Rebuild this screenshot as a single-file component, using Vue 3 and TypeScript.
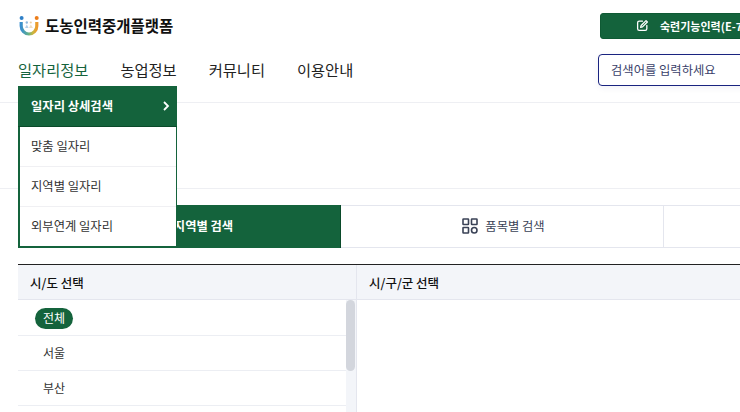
<template>
  <div class="page">
    <header class="site-header">
      <div class="header-top">
        <div class="logo">
          <svg class="logo-mark" width="22" height="22" viewBox="0 0 22 22" aria-hidden="true">
            <defs>
              <linearGradient id="arc" x1="0" y1="0" x2="1" y2="0">
                <stop offset="0" stop-color="#3a8fd0" />
                <stop offset="0.45" stop-color="#62b08a" />
                <stop offset="0.75" stop-color="#c9b83f" />
                <stop offset="1" stop-color="#ee9a2c" />
              </linearGradient>
            </defs>
            <circle cx="3.600" cy="3" r="2" fill="#2f80c8" />
            <circle cx="18.700" cy="3" r="2" fill="#ec7d1a" />
            <path d="M3.200 7 V11 A7.800 8 0 0 0 18.800 11 V7" fill="none" stroke="url(#arc)" stroke-width="3.200" />
            <circle cx="8.800" cy="7.500" r="1.200" fill="#8fb8de" />
            <circle cx="12.800" cy="7.500" r="1.100" fill="#eccf9f" />
            <path d="M7 13 L8.800 9.500 L10.600 13 Z" fill="#b4cfe8" />
            <path d="M11 13 L12.800 9.500 L15 13 Z" fill="#eedfc4" />
          </svg>
          <span class="logo-text">도농인력중개플랫폼</span>
        </div>
        <button class="skilled-btn">
          <svg width="13" height="13" viewBox="0 0 24 24" fill="none" stroke="#fff" stroke-width="2.400" stroke-linecap="round" stroke-linejoin="round" aria-hidden="true">
            <path d="M12 4H6a3 3 0 0 0-3 3v11a3 3 0 0 0 3 3h11a3 3 0 0 0 3-3v-6" />
            <path d="M18.500 3 21 5.500 12 14.500l-3.500 1 1-3.500z" />
          </svg>
          <span>숙련기능인력(E-7-3)</span>
        </button>
      </div>
      <div class="header-nav">
        <nav class="gnb">
          <a
            v-for="(item, i) in gnbItems"
            :key="item"
            class="gnb-item"
            :class="{ active: i === 0 }"
          >{{ item }}</a>
        </nav>
        <div class="search-box">검색어를 입력하세요</div>
      </div>
    </header>

    <ul class="dropdown">
      <li
        v-for="(item, i) in subItems"
        :key="item"
        class="dropdown-item"
        :class="{ selected: i === 0 }"
      >
        <span>{{ item }}</span>
        <svg v-if="i === 0" width="8" height="10" viewBox="0 0 8 10" fill="none" stroke="#fff" stroke-width="1.800" aria-hidden="true">
          <path d="M2 1 6 5 2 9" />
        </svg>
      </li>
    </ul>

    <main class="content">
      <div class="title-rule"></div>
      <div class="tabs">
        <div class="tab active">지역별 검색</div>
        <div class="tab second">
          <svg width="16" height="16" viewBox="0 0 16 16" fill="none" stroke="#3a4256" stroke-width="1.600" aria-hidden="true">
            <rect x="1" y="1" width="5.500" height="5.500" rx="0.500" />
            <rect x="9.500" y="1" width="5.500" height="5.500" rx="0.500" />
            <rect x="1" y="9.500" width="5.500" height="5.500" rx="0.500" />
            <circle cx="12.250" cy="12.250" r="2.750" />
          </svg>
          <span>품목별 검색</span>
        </div>
        <div class="tab"></div>
      </div>

      <div class="picker">
        <section class="col col-region">
          <h4 class="col-head">시/도 선택</h4>
          <div class="col-body">
            <ul class="region-list">
              <li v-for="(r, i) in regions" :key="r" class="region-row">
                <span class="region-name" :class="{ on: i === 0 }">{{ r }}</span>
              </li>
            </ul>
            <div class="scroll-track"><div class="scroll-thumb"></div></div>
          </div>
        </section>
        <section class="col col-city">
          <h4 class="col-head">시/구/군 선택</h4>
        </section>
      </div>
    </main>
  </div>
</template>

<script setup lang="ts">
const gnbItems = ["일자리정보", "농업정보", "커뮤니티", "이용안내"];
const subItems = ["일자리 상세검색", "맞춤 일자리", "지역별 일자리", "외부연계 일자리"];
const regions = ["전체", "서울", "부산"];
</script>

<style>
html,
body {
  margin: 0;
  background: #fff;
  overflow: hidden;
}
</style>

<style scoped>
.page {
  position: relative;
  width: 740px;
  height: 412px;
  overflow: hidden;
  font-family: "Noto Sans CJK KR", "Noto Sans", sans-serif;
  color: #222;
}

.site-header {
  height: 102px;
  border-bottom: 1px solid #eeeff3;
}

.header-top {
  display: flex;
  align-items: center;
  height: 52px;
  padding-left: 18px;
}

.logo {
  display: flex;
  align-items: center;
  gap: 5px;
  width: 582px;
  flex: none;
  padding-bottom: 1px;
}

.logo-mark {
  flex: none;
}

.logo-text {
  font-size: 15.500px;
  font-weight: 700;
  color: #111;
  padding-bottom: 2px;
}

.skilled-btn {
  flex: none;
  display: flex;
  align-items: center;
  justify-content: flex-start;
  gap: 11px;
  width: 260px;
  height: 26px;
  padding: 0 0 0 35px;
  border: 1px solid #0f5a34;
  border-radius: 3px;
  background: #14633c;
  color: #fff;
  font-family: inherit;
  font-size: 11px;
  font-weight: 700;
  margin-top: -1px;
}

.header-nav {
  display: flex;
  align-items: center;
  height: 36px;
  padding-left: 18px;
}

.gnb {
  display: flex;
  gap: 32px;
  width: 580px;
  flex: none;
  padding-bottom: 2px;
}

.gnb-item {
  font-size: 15.300px;
  color: #222;
}

.gnb-item.active {
  color: #14633c;
}

.search-box {
  flex: none;
  width: 260px;
  height: 30px;
  line-height: 30px;
  padding-left: 12px;
  border: 1px solid #1a2480;
  border-radius: 4px;
  box-shadow: 0 2px 6px rgba(30, 40, 120, 0.06);
  font-size: 12.300px;
  color: #3a3f6a;
}

.dropdown {
  position: absolute;
  top: 86px;
  left: 18px;
  z-index: 5;
  width: 159px;
  box-sizing: border-box;
  margin: 0;
  padding: 0;
  list-style: none;
  background: #fff;
  border: 2px solid #14633c;
  border-top: 0;
  border-right-width: 1px;
}

.dropdown-item {
  display: flex;
  align-items: center;
  justify-content: space-between;
  height: 40px;
  box-sizing: border-box;
  padding: 0 6px 2px 11px;
  border-bottom: 1px solid #f0f0f3;
  font-size: 12.300px;
  color: #333;
}

.dropdown-item:last-child {
  height: 39px;
  border-bottom: 0;
}

.dropdown-item.selected {
  height: 41px;
  margin-left: -2px;
  margin-right: -1px;
  padding: 0 7px 0 13px;
  border-bottom: 1px solid #0a4a2a;
  background: #14633c;
  color: #fff;
  font-weight: 700;
}

.content {
  padding: 0 0 0 18px;
}

.title-rule {
  height: 85px;
  margin-left: -18px;
  border-bottom: 1px solid #eeeff3;
}

.tabs {
  display: flex;
  width: 970px;
  height: 43px;
  margin-top: 16px;
  box-sizing: border-box;
  border-top: 1px solid #e4e6ee;
  border-bottom: 1px solid #e4e6ee;
}

.tab {
  flex: none;
  display: flex;
  align-items: center;
  justify-content: center;
  gap: 7px;
  width: 323px;
  box-sizing: border-box;
  padding-bottom: 1px;
  border-right: 1px solid #e4e6ee;
  font-size: 12.300px;
  color: #3a4256;
}

.tab.second {
  padding-left: 3px;
}

.tab.active {
  margin: -1px 0;
  background: #14633c;
  color: #fff;
  font-weight: 700;
  border-right: 1px solid #0a4a2a;
  padding-left: 49px;
}

.picker {
  display: flex;
  margin-top: 16px;
  width: 970px;
  border-top: 1px solid #222;
}

.col-region {
  flex: none;
  width: 339px;
  box-sizing: border-box;
  border-right: 1px solid #e4e6ee;
}

.col-city {
  flex: 1;
}

.col-head {
  height: 34px;
  line-height: 35px;
  margin: 0;
  padding-left: 12px;
  background: #f3f5f9;
  border-bottom: 1px solid #e4e6ee;
  font-size: 12.500px;
  font-weight: 500;
  color: #111;
}

.col-body {
  display: flex;
  height: 120px;
}

.region-list {
  flex: 1;
  margin: 0;
  padding: 1px 0 0;
  list-style: none;
}

.region-row {
  display: flex;
  align-items: center;
  height: 35px;
  box-sizing: border-box;
  padding-left: 17px;
  border-bottom: 1px solid #eceef3;
  font-size: 12px;
  color: #333;
}

.region-name {
  padding: 0 8px 2px;
  line-height: 19px;
  border-radius: 11px;
}

.region-name.on {
  background: #14633c;
  color: #fff;
}

.scroll-track {
  flex: none;
  width: 10px;
  background: #f3f5f9;
}

.scroll-thumb {
  width: 9px;
  height: 71px;
  border-radius: 5px;
  background: #d3d6dd;
}
</style>
